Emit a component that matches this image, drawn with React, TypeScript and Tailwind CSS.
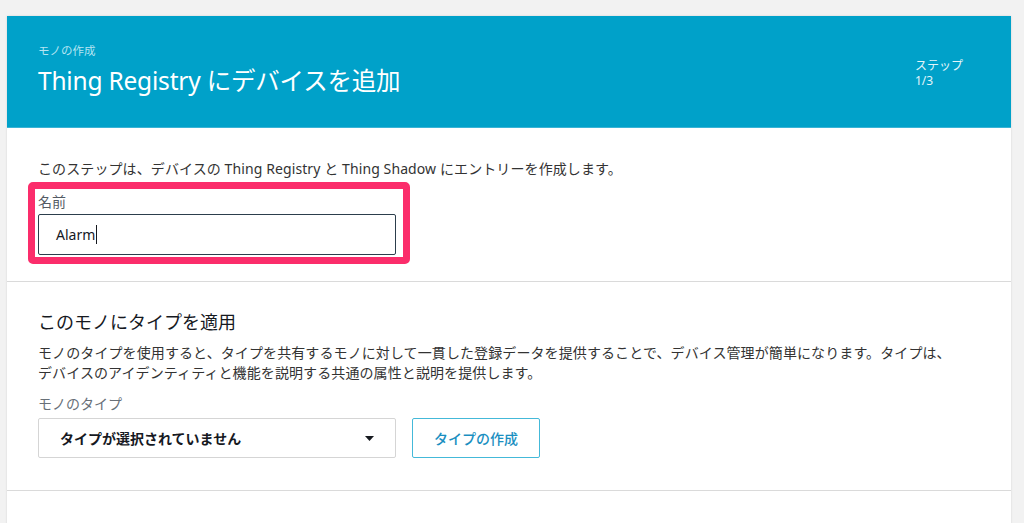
const font = { fontFamily: '"Noto Sans", "Noto Sans CJK JP", sans-serif' };

const App = () => {
  return (
    <div
      className="h-screen bg-[#f2f2f2] pt-[16px] pl-[7px] overflow-hidden"
      style={font}
    >
      <div className="w-[1004px] bg-white shadow-[0_0_2px_rgba(0,0,0,0.12)]">
        {/* header */}
        <div className="h-[112px] bg-[#00a1c9] border-b border-[#3ab3d5] flex justify-between pl-[31px] pr-[40px]">
          <div className="pt-[27px]">
            <div className="text-[11.5px] leading-[16px] text-[#b5e4f2]">モノの作成</div>
            <h1 className="mt-[6px] text-[24.5px] leading-[32px] text-white tracking-[-0.2px]">
              Thing Registry にデバイスを追加
            </h1>
          </div>
          <div className="pt-[42px] w-[56px] text-[12px] leading-[15px] text-[#e3f5fa]">
            <div>ステップ</div>
            <div>1/3</div>
          </div>
        </div>

        {/* name */}
        <div className="border-b border-[#dadada] pl-[31px] pt-[31px] pb-[17px]">
          <p className="text-[14px] leading-[20px] text-[#333] tracking-[0.1px]">
            このステップは、デバイスの Thing Registry と Thing Shadow にエントリーを作成します。
          </p>
          <div className="mt-[3px] -ml-[10px] w-[382px] border-[7px] border-[#fb2d6b] rounded-[5px] pl-[3px] pr-[7px] pt-[3px] pb-[2px]">
            <div className="text-[14px] leading-[20px] text-[#545b64]">名前</div>
            <div className="mt-[2px] h-[41px] border border-[#2c3e4c] rounded-[2px] flex items-center pl-[17px] text-[14px] text-[#16191f]">
              Alarm
              <span className="ml-[1px] w-[1px] h-[19px] bg-[#16191f]" />
            </div>
          </div>
        </div>

        {/* type */}
        <div className="border-b border-[#dadada] pl-[31px] pt-[27px] pb-[32px]">
          <h2 className="text-[18px] leading-[26px] text-[#16191f]">このモノにタイプを適用</h2>
          <p className="mt-[8px] text-[14px] leading-[20px] text-[#333] whitespace-nowrap tracking-[0.1px]">
            モノのタイプを使用すると、タイプを共有するモノに対して一貫した登録データを提供することで、デバイス管理が簡単になります。タイプは、
            <br />
            デバイスのアイデンティティと機能を説明する共通の属性と説明を提供します。
          </p>
          <div className="mt-[11px] text-[14px] leading-[20px] text-[#687078]">モノのタイプ</div>
          <div className="mt-[4px] flex gap-[16px]">
            <div className="w-[358px] h-[40px] border border-[#d5d5d5] rounded-[2px] flex items-center justify-between pl-[21px] pr-[21px]">
              <span className="text-[14px] font-bold text-[#16191f]">タイプが選択されていません</span>
              <svg width="9" height="5" viewBox="0 0 9 5">
                <path d="M0 0h9L4.5 5z" fill="#16191f" />
              </svg>
            </div>
            <button className="w-[128px] h-[40px] border border-[#44b9d9] rounded-[2px] text-[14px] font-medium text-[#1a8fc1]">
              タイプの作成
            </button>
          </div>
        </div>

        {/* next section */}
        <div className="pl-[31px] pt-[44px] h-[80px]">
          <h2 className="text-[18px] leading-[26px] text-[#16191f]">属性を追加</h2>
        </div>
      </div>
    </div>
  );
};

export default App;
